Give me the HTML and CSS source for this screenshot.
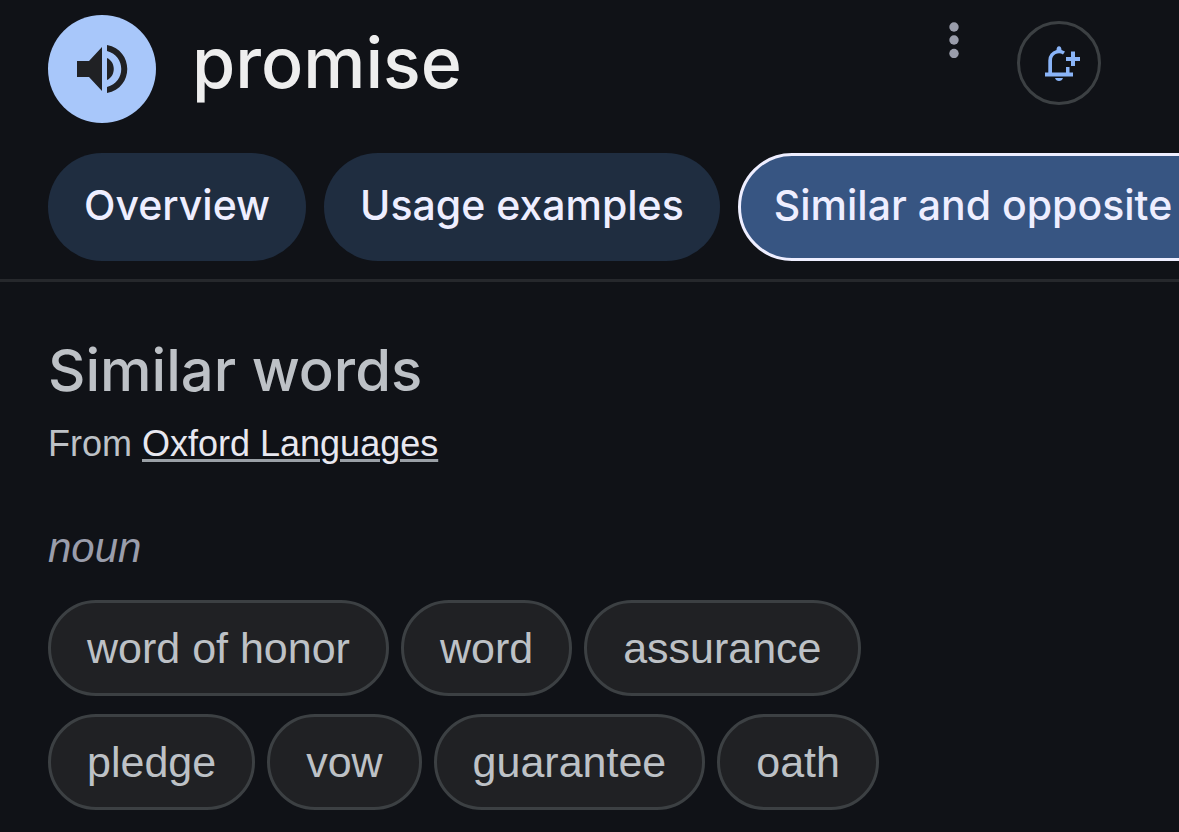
FILE: index.html
```html
<!DOCTYPE html>
<html lang="en">

<head>
    <meta charset="UTF-8">
    <meta name="viewport" content="width=device-width, initial-scale=1.0">
    <title>promise</title>
    <link rel="stylesheet" href="styles.css">
</head>

<body>
    <header class="word-header">
        <button class="listen" type="button" aria-label="Listen">
            <svg width="54" height="54" viewBox="0 0 54 54" fill="currentColor">
                <path d="M2 19h12L27 5v44L14 35H2z" />
                <path d="M32 16c9 4 9 18 0 22z" />
                <path d="M32 3c27 5 27 43 0 48v-6c19-5 19-31 0-36z" />
            </svg>
        </button>
        <h1>promise</h1>
        <button class="more" type="button" aria-label="More options">
            <svg width="10" height="36" viewBox="0 0 10 36" fill="currentColor">
                <circle cx="5" cy="5" r="4.7" />
                <circle cx="5" cy="18" r="4.7" />
                <circle cx="5" cy="31.5" r="4.7" />
            </svg>
        </button>
        <button class="notify" type="button" aria-label="Get notifications">
            <svg width="42" height="36" viewBox="-6 0 42 36" fill="currentColor">
                <path d="M1 27.500h3.300V15.500A10.700 10.700 0 0 1 12.500 5C12.500 3 13.500 1.300 15 1.300S17.500 3 17.500 5L21 6.500l-2 3A7 7 0 0 0 8 15.500v12h14V22h3.500v5.500H29v4H1z" />
                <path d="M11 33h8q-1 3-4 3t-4-3z" />
                <path d="M27 6.500h4V12h5v4h-5v5h-4v-5h-5v-4h5z" />
            </svg>
        </button>
    </header>

    <nav class="tabs">
        <a class="tab" href="#overview">Overview</a>
        <a class="tab" href="#usage">Usage examples</a>
        <a class="tab active" href="#similar" aria-current="page">Similar and opposite</a>
    </nav>

    <main id="similar">
        <h2>Similar words</h2>
        <p class="source">From <a href="#oxford">Oxford Languages</a></p>
        <p class="word-class">noun</p>
        <div class="words">
            <a class="word" href="#word-of-honor">word of honor</a>
            <a class="word" href="#word">word</a>
            <a class="word" href="#assurance">assurance</a>
            <a class="word" href="#pledge">pledge</a>
            <a class="word" href="#vow">vow</a>
            <a class="word" href="#guarantee">guarantee</a>
            <a class="word" href="#oath">oath</a>
        </div>
    </main>
</body>

</html>
```
FILE: styles.css
```css
* {
    box-sizing: border-box;
}

body {
    margin: 0;
    background-color: #101217;
    color: #bdc1c6;
    font-family: "Liberation Sans", Arial, sans-serif;
    overflow-x: hidden;
}

h1,
h2,
p {
    margin: 0;
}

button {
    padding: 0;
    border: none;
    background: none;
    cursor: pointer;
}

svg {
    display: block;
}

.word-header {
    display: flex;
    align-items: flex-start;
    padding: 15px 78px 30px 48px;
}

.listen {
    display: grid;
    place-items: center;
    width: 108px;
    height: 108px;
    border-radius: 50%;
    background-color: #a8c7fa;
    color: #202124;
}

h1 {
    flex: 1;
    margin-left: 36px;
    font-family: Inter, sans-serif;
    font-size: 70px;
    font-weight: 500;
    line-height: 96px;
    color: #eeeeee;
}

.more {
    margin: 7px 58px 0 0;
    color: #9a9dab;
}

.notify {
    display: grid;
    place-items: center;
    width: 84px;
    height: 84px;
    margin-top: 6px;
    border: 3px solid #3c4043;
    border-radius: 50%;
    color: #8ab4f8;
}

.tabs {
    display: flex;
    gap: 18px;
    padding: 0 48px 18px;
    border-bottom: 3px solid #26282c;
    overflow: hidden;
}

.tab {
    flex: none;
    height: 108px;
    padding: 0 36px;
    border-radius: 54px;
    background-color: #1f2d40;
    color: #eeeeff;
    font-family: Inter, sans-serif;
    font-size: 41px;
    font-weight: 500;
    line-height: 104px;
    text-decoration: none;
}

.tab.active {
    padding: 0 96px 0 33px;
    border: 3px solid #eeeeff;
    background-color: #375582;
    line-height: 98px;
}

main {
    padding: 48px;
}

h2 {
    font-family: Inter, sans-serif;
    font-size: 58px;
    font-weight: 500;
    line-height: 80px;
}

.source {
    font-size: 36px;
    line-height: 68px;
}

.source a {
    color: #e8e8f0;
    text-decoration-color: #9aa0a6;
    text-decoration-thickness: 3px;
    text-underline-offset: 3px;
}

.word-class {
    margin-top: 46px;
    color: #9a9dab;
    font-size: 42px;
    font-style: italic;
    line-height: 48px;
}

.words {
    display: flex;
    flex-wrap: wrap;
    gap: 18px 12px;
    max-width: 900px;
    margin-top: 28px;
}

.word {
    height: 96px;
    padding: 0 36px;
    border: 3px solid #3c4043;
    border-radius: 48px;
    background-color: #202124;
    color: #bdc1c6;
    font-size: 43px;
    line-height: 90px;
    text-decoration: none;
}
```
